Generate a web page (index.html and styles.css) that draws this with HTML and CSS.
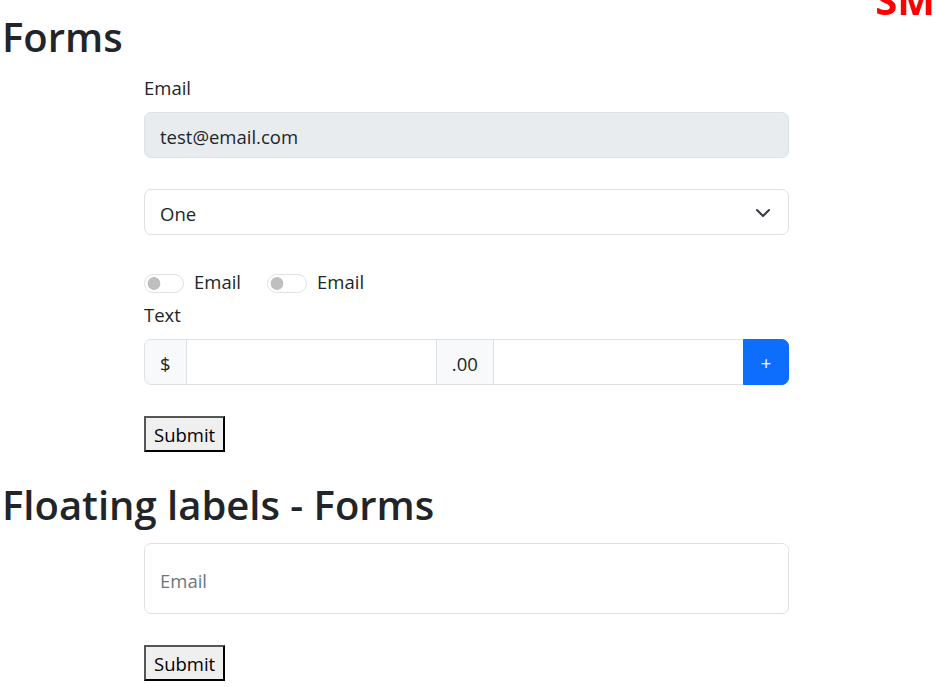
FILE: index.html
```html
<!DOCTYPE html>
<html lang="en">
<head>
<meta charset="utf-8">
<title>Forms</title>
<link rel="stylesheet" href="styles.css">
</head>
<body>
<div class="bp">SM</div>

<h1 class="title">Forms</h1>
<form class="form">
  <div class="field">
    <label class="label" for="email">Email</label>
    <input class="control control-readonly" id="email" type="email" value="test@email.com" readonly>
  </div>

  <div class="field">
    <div class="select-wrap">
      <select class="control select">
        <option>One</option>
        <option>Two</option>
      </select>
      <svg class="chevron" width="16" height="16" viewBox="0 0 16 16" aria-hidden="true"><path d="M2 5l6 6 6-6" fill="none" stroke="#343a40" stroke-width="2" stroke-linecap="round" stroke-linejoin="round"/></svg>
    </div>
  </div>

  <div class="checks">
    <label class="check"><input class="switch" type="checkbox"><span>Email</span></label>
    <label class="check"><input class="switch" type="checkbox"><span>Email</span></label>
  </div>

  <div class="field">
    <label class="label">Text</label>
    <div class="group">
      <span class="addon addon-first">$</span>
      <input class="group-input" type="text">
      <span class="addon">.00</span>
      <input class="group-input" type="text">
      <button class="btn-plus" type="button">+</button>
    </div>
  </div>

  <button class="submit" type="submit">Submit</button>
</form>

<h1 class="title title-second">Floating labels - Forms</h1>
<form class="form">
  <div class="field floating">
    <input class="control control-floating" id="femail" type="email" placeholder=" ">
    <label class="floating-label" for="femail">Email</label>
  </div>
  <button class="submit" type="submit">Submit</button>
</form>
</body>
</html>
```
FILE: styles.css
```css
*, *::before, *::after { box-sizing: border-box; }

html, body { margin: 0; }

body {
  font-family: "Open Sans", "Noto Sans", sans-serif;
  font-size: 18.5px;
  line-height: 30px;
  color: #212529;
  background: #fff;
  padding-top: 12px;
}

.bp {
  position: fixed;
  top: -20px;
  right: 0;
  color: #ff0000;
  font-weight: 700;
  font-size: 40px;
  line-height: 40px;
}

.title {
  font-size: 40px;
  font-weight: 600;
  line-height: 50px;
  margin: 0 0 10px 2px;
}

.title-second {
  margin-top: 28px;
  margin-bottom: 13px;
}

.form {
  margin-left: 144px;
  width: 645px;
}

.field { margin-bottom: 31px; }

.label {
  display: block;
  padding-top: 1px;
  margin: 0 0 9px;
}

.control {
  display: block;
  width: 100%;
  height: 46px;
  padding: 3px 15px 0;
  font: inherit;
  color: #212529;
  background: #fff;
  border: 1px solid #dee2e6;
  border-radius: 7px;
  outline: none;
}

.control-readonly { background: #e9ecef; }

.select-wrap { position: relative; }

.select {
  appearance: none;
  -webkit-appearance: none;
}

.chevron {
  position: absolute;
  right: 18px;
  top: 16px;
  pointer-events: none;
}

.checks {
  display: flex;
  gap: 26px;
  height: 30px;
  margin: 0 0 3px;
}

.check {
  display: flex;
  align-items: center;
  gap: 10px;
}

.check span { padding-top: 2px; }

.switch {
  appearance: none;
  -webkit-appearance: none;
  margin: 4px 0 0;
  width: 40px;
  height: 19px;
  border: 1px solid #dee2e6;
  border-radius: 10px;
  background: radial-gradient(circle at 9px 50%, #bfbfbf 0, #bfbfbf 6px, transparent 6.7px);
}

.group {
  display: flex;
  height: 46px;
}

.addon {
  display: flex;
  align-items: center;
  padding: 3px 15px 0;
  background: #f8f9fa;
  border: 1px solid #dee2e6;
  margin-left: -1px;
}

.addon-first {
  margin-left: 0;
  border-radius: 7px 0 0 7px;
}

.group-input {
  flex: 1;
  min-width: 0;
  margin-left: -1px;
  font: inherit;
  border: 1px solid #dee2e6;
  outline: none;
  padding: 0 15px;
}

.btn-plus {
  width: 46px;
  margin-left: -1px;
  border: 1px solid #0d6efd;
  background: #0d6efd;
  color: #fff;
  font: inherit;
  border-radius: 0 7px 7px 0;
  padding: 2px 0 0;
}

.submit {
  display: block;
  font: inherit;
  line-height: 30px;
  color: #000;
  background: #efefef;
  border: 2px solid;
  border-color: #555 #000 #000 #555;
  border-radius: 0;
  padding: 2px 8px 0;
  height: 36px;
  margin: 0;
}

.floating { position: relative; }

.control-floating { height: 71px; }

.floating-label {
  position: absolute;
  left: 1px;
  top: 1px;
  padding: 22px 15px 20px;
  color: #6c757d;
  pointer-events: none;
}
```
